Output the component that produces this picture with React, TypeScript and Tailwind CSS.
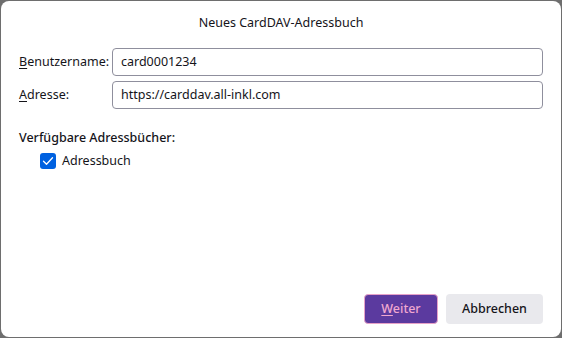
const FONT = { fontFamily: '"Noto Sans", "Open Sans", Arial, sans-serif' }

function Field({ label, mnemonic, value }: { label: string; mnemonic: string; value: string }) {
  const rest = label.slice(mnemonic.length)
  return (
    <div className="flex items-center h-[28px]">
      <label className="w-[93px] shrink-0 text-[12.5px] text-[#15141a]">
        <span className="underline underline-offset-2">{mnemonic}</span>{rest}
      </label>
      <div className="flex-1 h-full rounded-[4px] border border-[#8f8f9d] bg-white flex items-center px-[8px] text-[12.5px] text-[#15141a]">
        {value}
      </div>
    </div>
  )
}

export default function App() {
  return (
    <div className="w-[562px] h-[338px] bg-[#6e6e6e] pl-px pt-px pr-px pb-px" style={FONT}>
      <div className="w-full h-full bg-white rounded-[8px] flex flex-col">
        <div className="h-[47px] pb-[3px] flex items-center justify-center text-[12.5px] text-[#15141a]">
          Neues CardDAV-Adressbuch
        </div>

        <div className="pl-[18px] pr-[18px] flex flex-col gap-[5px]">
          <Field label="Benutzername:" mnemonic="B" value="card0001234" />
          <Field label="Adresse:" mnemonic="A" value="https://carddav.all-inkl.com" />
        </div>

        <div className="px-[18px] mt-[20px] h-[18px] flex items-center text-[12.5px] font-medium text-[#15141a]">
          Verfügbare Adressbücher:
        </div>
        <div className="pl-[39px] mt-[6px] h-[16px] flex items-center gap-[6px] text-[12.5px] text-[#15141a]">
          <span className="w-[16px] h-[16px] rounded-[3px] bg-[#0061e0] flex items-center justify-center">
            <svg width="12" height="12" viewBox="0 0 12 12" fill="none">
              <path d="M1.5 6.2 L4.5 9.2 L10.5 2.8" stroke="white" strokeWidth="1.3" strokeLinecap="round" strokeLinejoin="round" />
            </svg>
          </span>
          Adressbuch
        </div>

        <div className="flex-1" />

        <div className="flex justify-end gap-[8px] pl-[18px] pr-[18px] pb-[13px]">
          <button className="w-[74px] h-[30px] rounded-[4px] bg-[#5b3a9f] border border-[#e7a2c8] text-[12.5px] text-[#f0a8d0] font-medium">
            <span className="underline underline-offset-2">W</span>eiter
          </button>
          <button className="w-[97px] h-[30px] rounded-[4px] bg-[#e9e9ed] text-[12.5px] text-[#15141a] font-medium">
            Abbrechen
          </button>
        </div>
      </div>
    </div>
  )
}
